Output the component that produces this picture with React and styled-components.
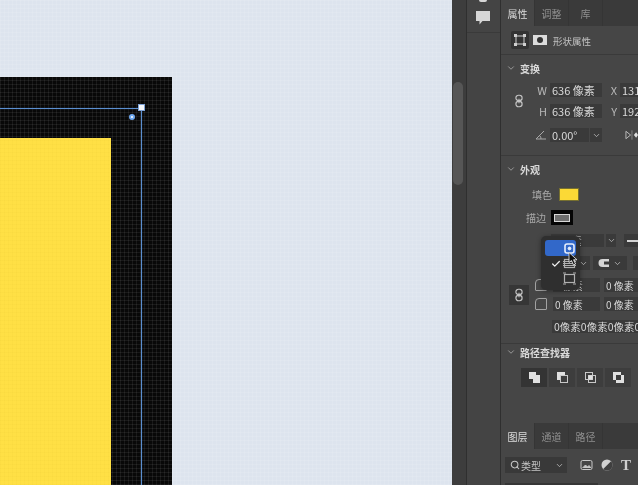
import styled, { createGlobalStyle } from "styled-components";
import { ChevronDown, Search, Check } from "lucide-react";

const GlobalStyle = createGlobalStyle`
  html, body {
    margin: 0;
    padding: 0;
    background: #464646;
  }
  * { box-sizing: border-box; }
`;

const Page = styled.div`
  display: flex;
  width: 638px;
  height: 485px;
  overflow: hidden;
  font-family: "Noto Sans CJK SC", "Noto Sans", sans-serif;
  color: #cfcfcf;
  font-size: 10px;
`;

const Canvas = styled.div`
  position: relative;
  width: 452px;
  flex: none;
  overflow: hidden;
  background-color: #dde4ee;
  background-image:
    repeating-linear-gradient(0deg, rgba(255,255,255,0.1) 0 1px, transparent 1px 4px),
    repeating-linear-gradient(90deg, rgba(255,255,255,0.1) 0 1px, transparent 1px 4px);
`;

const BlackRect = styled.div`
  position: absolute;
  left: 0;
  top: 77px;
  width: 172px;
  height: 408px;
  background-color: #080808;
  background-image:
    repeating-linear-gradient(0deg, rgba(255,255,255,0.07) 0 1px, transparent 1px 4px),
    repeating-linear-gradient(90deg, rgba(255,255,255,0.07) 0 1px, transparent 1px 4px);
`;

const YellowRect = styled.div`
  position: absolute;
  left: 0;
  top: 138px;
  width: 111px;
  height: 347px;
  background-color: #ffe045;
  background-image:
    repeating-linear-gradient(0deg, rgba(180,140,0,0.03) 0 1px, transparent 1px 4px),
    repeating-linear-gradient(90deg, rgba(180,140,0,0.03) 0 1px, transparent 1px 4px);
`;

const GuideH = styled.div`
  position: absolute;
  left: 0;
  top: 108px;
  width: 141px;
  height: 1px;
  background: #5b8fd0;
  box-shadow: 0 0 1px #3f66a0;
`;

const GuideV = styled.div`
  position: absolute;
  left: 141px;
  top: 108px;
  width: 1px;
  height: 377px;
  background: #5b8fd0;
  box-shadow: 0 0 1px #3f66a0;
`;

const Handle = styled.div`
  position: absolute;
  left: 138px;
  top: 104px;
  width: 7px;
  height: 7px;
  background: #f4f6fa;
  border: 1px solid #7fa3d6;
`;

const RadiusDot = styled.div`
  position: absolute;
  left: 129px;
  top: 114px;
  width: 6px;
  height: 6px;
  border-radius: 50%;
  background: #ffffff;
  border: 2px solid #6fa8ee;
`;

const Rail = styled.div`
  width: 15px;
  flex: none;
  background: #3d3d3d;
  border-right: 1px solid #2f2f2f;
  padding: 82px 0 0 1px;
`;

const Thumb = styled.div`
  width: 10px;
  height: 103px;
  border-radius: 5px;
  background: #565656;
`;

const Dock = styled.div`
  width: 34px;
  flex: none;
  background: #444444;
  border-right: 1px solid #2f2f2f;
`;

const DockTools = styled.div`
  height: 33px;
  display: flex;
  flex-direction: column;
  align-items: center;
  justify-content: space-between;
  padding: 0 1px 7px 0;
  border-bottom: 1px solid #3a3a3a;
  overflow: hidden;
`;

const DockStub = styled.div`
  width: 8px;
  height: 2px;
  background: #d6d6d6;
  border-radius: 0 0 2px 2px;
`;

const Panel = styled.div`
  position: relative;
  width: 137px;
  flex: none;
  display: flex;
  flex-direction: column;
  background: #464646;
  overflow: hidden;
  filter: blur(0.35px);
`;

const Tabs = styled.div`
  height: 26px;
  flex: none;
  display: flex;
  background: #3a3a3a;
`;

const Tab = styled.div`
  width: 34px;
  display: flex;
  align-items: center;
  justify-content: center;
  font-size: 10px;
  color: ${(p) => (p.$active ? "#dcdcdc" : "#8f8f8f")};
  background: ${(p) => (p.$active ? "#464646" : "transparent")};
  border-right: 1px solid #353535;
`;

const ShapeHeader = styled.div`
  height: 29px;
  flex: none;
  display: flex;
  align-items: center;
  padding-left: 10px;
  border-bottom: 1px solid #3a3a3a;
`;

const ShapeTool = styled.div`
  width: 18px;
  height: 18px;
  display: flex;
  align-items: center;
  justify-content: center;
  background: #333333;
  border-radius: 2px;
  margin-right: 4px;
`;

const MaskTool = styled.div`
  width: 14px;
  height: 10px;
  background: #dcdcdc;
  display: flex;
  align-items: center;
  justify-content: center;
  margin-right: 6px;
  &::after {
    content: "";
    width: 6px;
    height: 6px;
    border-radius: 50%;
    background: #333333;
  }
`;

const HeaderLabel = styled.span`
  font-size: 9.5px;
  color: #c2c2c2;
  padding-top: 1px;
`;

const Section = styled.div`
  flex: none;
  padding: ${(p) => p.$top}px 0 ${(p) => p.$bottom}px;
  border-bottom: ${(p) => (p.$line ? "1px solid #3a3a3a" : "none")};
`;

const Heading = styled.div`
  height: 16px;
  display: flex;
  align-items: center;
  gap: 4px;
  padding: 0 0 2px 5px;
  font-size: 10px;
  font-weight: 700;
  color: #d8d8d8;
`;

const LinkedRows = styled.div`
  display: flex;
  align-items: center;
  margin-top: 6px;
`;

const LinkCol = styled.div`
  width: ${(p) => p.$w || 36}px;
  flex: none;
  display: flex;
  justify-content: center;
`;

const RowStack = styled.div`
  display: flex;
  flex-direction: column;
  gap: ${(p) => p.$gap || 7}px;
`;

const Row = styled.div`
  display: flex;
  align-items: center;
  flex: none;
  height: ${(p) => p.$h || 14}px;
  margin-top: ${(p) => p.$mt || 0}px;
  padding-left: ${(p) => p.$pl || 0}px;
`;

const AxisLabel = styled.span`
  width: ${(p) => p.$w || 10}px;
  flex: none;
  text-align: right;
  margin-right: 3px;
  font-size: 11px;
  color: #b8b8b8;
`;

const Field = styled.div`
  width: ${(p) => p.$w}px;
  height: 100%;
  flex: none;
  display: flex;
  align-items: center;
  padding-left: ${(p) => p.$pl ?? 2}px;
  margin-right: ${(p) => p.$mr || 0}px;
  background: #3a3a3a;
  color: #d8d8d8;
  font-size: ${(p) => p.$fs || 11}px;
  white-space: nowrap;
  overflow: hidden;
`;

const DropBtn = styled.div`
  width: ${(p) => p.$w || 12}px;
  height: 100%;
  flex: none;
  display: flex;
  align-items: center;
  justify-content: ${(p) => p.$justify || "center"};
  gap: 4px;
  padding-right: ${(p) => p.$pr || 0}px;
  margin-right: ${(p) => p.$mr || 0}px;
  background: #3a3a3a;
  color: #c4c4c4;
`;

const SwatchLabel = styled.span`
  width: ${(p) => p.$w}px;
  flex: none;
  text-align: right;
  font-size: 10px;
  color: #a9a9a9;
`;

const FillSwatch = styled.div`
  width: 20px;
  height: 13px;
  margin-left: 7px;
  background: #fbd936;
  border: 1px solid #77702f;
`;

const StrokeSwatch = styled.div`
  width: 22px;
  height: 15px;
  margin-left: 5px;
  background: #050505;
  display: flex;
  align-items: center;
  justify-content: center;
  &::after {
    content: "";
    width: 14px;
    height: 6px;
    background: #6f6f6f;
    border: 1px solid #d8d8d8;
  }
`;

const LineSample = styled.div`
  width: 22px;
  height: 100%;
  flex: none;
  display: flex;
  align-items: center;
  padding-left: 3px;
  background: #3a3a3a;
  &::after {
    content: "";
    width: 100%;
    height: 2px;
    background: #d4d4d4;
  }
`;

const LinkBox = styled.div`
  width: 20px;
  height: 20px;
  flex: none;
  margin: 0 6px 0 8px;
  display: flex;
  align-items: center;
  justify-content: center;
  background: #363636;
`;

const CornerGroup = styled.div`
  display: flex;
  align-items: center;
  margin-top: 8px;
`;

const CornerMark = styled.div`
  width: 12px;
  height: 12px;
  flex: none;
  margin-right: 6px;
  border: 1px solid #a2a2a2;
  border-radius: 4px 1px 1px 1px;
`;

const PathBtn = styled.div`
  width: 26px;
  height: 19px;
  flex: none;
  margin-right: 2px;
  display: flex;
  align-items: center;
  justify-content: center;
  background: ${(p) => (p.$active ? "#343434" : "#3d3d3d")};
`;

const Spacer = styled.div`
  flex: 1;
`;

const TypeSelect = styled.div`
  width: 62px;
  height: 16px;
  flex: none;
  margin-left: 4px;
  display: flex;
  align-items: center;
  gap: 1px;
  padding: 0 3px 0 5px;
  background: #393939;
  font-size: 10px;
  color: #c6c6c6;
`;

const FilterIcons = styled.div`
  display: flex;
  align-items: center;
  gap: 8px;
  margin-left: 13px;
  color: #d0d0d0;
`;

const SerifT = styled.span`
  font-family: "Liberation Serif", serif;
  font-size: 15px;
  font-weight: 700;
  line-height: 1;
`;

const BottomField = styled.div`
  width: 93px;
  height: 2px;
  margin: 10px 0 0 4px;
  flex: none;
  background: #363636;
`;

const Popup = styled.div`
  position: absolute;
  left: 40px;
  top: 236px;
  width: 39px;
  height: 54px;
  padding: 4px;
  border-radius: 5px;
  background: #2f2f2f;
  box-shadow: 0 1px 5px rgba(0,0,0,0.4);
`;

const PopupRow = styled.div`
  height: ${(p) => (p.$active ? 16 : 15)}px;
  display: flex;
  align-items: center;
  justify-content: space-between;
  padding: 0 0 0 6px;
  border-radius: 3px;
  background: ${(p) => (p.$active ? "#3268c9" : "transparent")};
  color: #f0f0f0;
`;

const CheckSlot = styled.div`
  width: 10px;
  display: flex;
`;

const Pointer = styled.svg`
  position: absolute;
  left: 67px;
  top: 251px;
`;

const Comment = () => (
  <svg width="14" height="14" viewBox="0 0 14 14">
    <path d="M0 0h14v10H6.5L3.5 13.5V10H0z" fill="#d6d6d6" />
  </svg>
);

const ShapeIcon = () => (
  <svg width="12" height="12" viewBox="0 0 12 12" fill="none" stroke="#d0d0d0">
    <rect x="2" y="2" width="8" height="8" />
    <rect x="0.5" y="0.5" width="2" height="2" fill="#d0d0d0" />
    <rect x="9.5" y="0.5" width="2" height="2" fill="#d0d0d0" />
    <rect x="0.5" y="9.5" width="2" height="2" fill="#d0d0d0" />
    <rect x="9.5" y="9.5" width="2" height="2" fill="#d0d0d0" />
  </svg>
);

const LinkIcon = () => (
  <svg width="8" height="14" viewBox="0 0 9 15" fill="none" stroke="#c4c4c4" strokeWidth="1.3">
    <rect x="1" y="1" width="7" height="6" rx="3" />
    <rect x="1" y="8" width="7" height="6" rx="3" />
    <path d="M4.5 5v5" />
  </svg>
);

const AngleIcon = () => (
  <svg width="12" height="10" viewBox="0 0 12 10" fill="none" stroke="#a8a8a8">
    <path d="M11 9H1L9 1" />
    <path d="M6 9a4 4 0 0 0-1.5-3.5" />
  </svg>
);

const FlipIcon = () => (
  <svg width="14" height="10" viewBox="0 0 14 10">
    <path d="M1 1l5 4-5 4z" fill="none" stroke="#c0c0c0" />
    <path d="M7.5 0v10" stroke="#8a8a8a" />
    <path d="M12 2L9.5 5 12 8 14 5z" fill="#e0e0e0" />
  </svg>
);

const CapIcon = () => (
  <svg width="11" height="10" viewBox="0 0 11 10">
    <path d="M11 1H4.5a4 4 0 0 0 0 8H11z" fill="#d4d4d4" />
    <rect x="6" y="3.5" width="5" height="3" fill="#3a3a3a" />
  </svg>
);

const Combine = ({ kind }) => (
  <svg width="13" height="13" viewBox="0 0 13 13">
    {kind === 0 && (
      <path d="M1 1h7v3h4v8H5V8H1z" fill="#e0e0e0" />
    )}
    {kind === 1 && (
      <>
        <rect x="1" y="1" width="8" height="8" fill="#e0e0e0" />
        <rect x="4.5" y="4.5" width="7" height="7" fill="#3d3d3d" stroke="#c8c8c8" />
      </>
    )}
    {kind === 2 && (
      <>
        <rect x="1.5" y="1.5" width="7" height="7" fill="none" stroke="#c8c8c8" />
        <rect x="4.5" y="4.5" width="7" height="7" fill="none" stroke="#c8c8c8" />
        <rect x="4.5" y="4.5" width="4" height="4" fill="#e0e0e0" />
      </>
    )}
    {kind === 3 && (
      <>
        <rect x="1" y="1" width="8" height="8" fill="#e0e0e0" />
        <rect x="4" y="4" width="8" height="8" fill="#e0e0e0" />
        <rect x="4" y="4" width="5" height="5" fill="#3d3d3d" />
      </>
    )}
  </svg>
);

const InsideAlign = ({ mode }) => (
  <svg width="13" height="13" viewBox="0 0 13 13" fill="none" stroke={mode === 0 ? "#e6eefc" : "#b0b0b0"}>
    {mode === 0 ? (
      <>
        <rect x="2" y="2" width="9" height="9" rx="2" strokeWidth="1.6" />
        <circle cx="6.5" cy="6.5" r="1.4" fill="#e6eefc" />
      </>
    ) : (
      <>
        <rect x="1.5" y="2.5" width="10" height="8" strokeWidth="1.2" />
        <path d={mode === 1 ? "M0 6.5h13M0 4.5h13M0 8.5h13" : "M0 1h3M10 1h3M0 12h3M10 12h3"} />
      </>
    )}
  </svg>
);

const ImageIcon = () => (
  <svg width="13" height="12" viewBox="0 0 13 12" fill="none" stroke="#c8c8c8">
    <rect x="1" y="1.5" width="11" height="9" rx="1.5" />
    <path d="M2.5 9l3-3 2 2 1.5-1.5L11 9" fill="#c8c8c8" />
  </svg>
);

const AdjustIcon = () => (
  <svg width="12" height="12" viewBox="0 0 12 12">
    <circle cx="6" cy="6" r="5.5" fill="#d0d0d0" />
    <path d="M10 2.2A5.5 5.5 0 0 1 2.2 10z" fill="#3f3f3f" />
  </svg>
);

export default function App() {
  return (
    <>
      <GlobalStyle />
      <Page>
        <Canvas>
          <BlackRect />
          <YellowRect />
          <GuideH />
          <GuideV />
          <Handle />
          <RadiusDot />
        </Canvas>
        <Rail>
          <Thumb />
        </Rail>
        <Dock>
          <DockTools>
            <DockStub />
            <Comment />
          </DockTools>
        </Dock>
        <Panel>
          <Tabs>
            <Tab $active>属性</Tab>
            <Tab>调整</Tab>
            <Tab>库</Tab>
          </Tabs>
          <ShapeHeader>
            <ShapeTool>
              <ShapeIcon />
            </ShapeTool>
            <MaskTool />
            <HeaderLabel>形状属性</HeaderLabel>
          </ShapeHeader>

          <Section $top={6} $bottom={13} $line>
            <Heading>
              <ChevronDown size={10} color="#a8a8a8" />
              变换
            </Heading>
            <LinkedRows>
              <LinkCol>
                <LinkIcon />
              </LinkCol>
              <RowStack>
                <Row>
                  <AxisLabel>W</AxisLabel>
                  <Field $w={52} $mr={7}>636 像素</Field>
                  <AxisLabel $w={8}>X</AxisLabel>
                  <Field $w={40}>1314</Field>
                </Row>
                <Row>
                  <AxisLabel>H</AxisLabel>
                  <Field $w={52} $mr={7}>636 像素</Field>
                  <AxisLabel $w={8}>Y</AxisLabel>
                  <Field $w={40}>192</Field>
                </Row>
              </RowStack>
            </LinkedRows>
            <Row $mt={10} $pl={30}>
              <LinkCol $w={19}>
                <AngleIcon />
              </LinkCol>
              <Field $w={39} $mr={1}>0.00°</Field>
              <DropBtn $mr={23}>
                <ChevronDown size={9} />
              </DropBtn>
              <FlipIcon />
            </Row>
          </Section>

          <Section $top={6} $bottom={10} $line>
            <Heading>
              <ChevronDown size={10} color="#a8a8a8" />
              外观
            </Heading>
            <Row $mt={9}>
              <SwatchLabel $w={51}>填色</SwatchLabel>
              <FillSwatch />
            </Row>
            <Row $mt={9} $h={15}>
              <SwatchLabel $w={45}>描边</SwatchLabel>
              <StrokeSwatch />
            </Row>
            <Row $mt={9} $h={13} $pl={50}>
              <Field $w={53} $mr={2} $pl={3} $fs={10}>1 像素</Field>
              <DropBtn $w={10} $mr={8}>
                <ChevronDown size={9} />
              </DropBtn>
              <LineSample />
            </Row>
            <Row $mt={9} $pl={60}>
              <DropBtn $w={29} $mr={3} $justify="flex-end" $pr={2}>
                <ChevronDown size={9} />
              </DropBtn>
              <DropBtn $w={34} $mr={6}>
                <CapIcon />
                <ChevronDown size={9} />
              </DropBtn>
              <Field $w={6} />
            </Row>
            <CornerGroup>
              <LinkBox>
                <LinkIcon />
              </LinkBox>
              <RowStack $gap={5}>
                <Row>
                  <CornerMark />
                  <Field $w={47} $mr={4} $fs={10}>0 像素</Field>
                  <Field $w={40} $fs={10}>0 像素</Field>
                </Row>
                <Row>
                  <CornerMark />
                  <Field $w={47} $mr={4} $fs={10}>0 像素</Field>
                  <Field $w={40} $fs={10}>0 像素</Field>
                </Row>
              </RowStack>
            </CornerGroup>
            <Row $mt={9} $h={13} $pl={51}>
              <Field $w={86} $fs={10.5}>0像素0像素0像素0</Field>
            </Row>
          </Section>

          <Section $top={1} $bottom={0}>
            <Heading>
              <ChevronDown size={10} color="#a8a8a8" />
              路径查找器
            </Heading>
            <Row $mt={7} $h={19} $pl={20}>
              <PathBtn $active>
                <Combine kind={0} />
              </PathBtn>
              <PathBtn>
                <Combine kind={1} />
              </PathBtn>
              <PathBtn>
                <Combine kind={2} />
              </PathBtn>
              <PathBtn>
                <Combine kind={3} />
              </PathBtn>
            </Row>
          </Section>

          <Spacer />

          <Tabs>
            <Tab $active>图层</Tab>
            <Tab>通道</Tab>
            <Tab>路径</Tab>
          </Tabs>
          <Row $mt={8} $h={16}>
            <TypeSelect>
              <Search size={10} strokeWidth={2.5} />
              类型
              <Spacer />
              <ChevronDown size={9} />
            </TypeSelect>
            <FilterIcons>
              <ImageIcon />
              <AdjustIcon />
              <SerifT>T</SerifT>
            </FilterIcons>
          </Row>
          <BottomField />

          <Popup>
            <PopupRow $active>
              <CheckSlot />
              <InsideAlign mode={0} />
            </PopupRow>
            <PopupRow>
              <CheckSlot>
                <Check size={10} strokeWidth={3} />
              </CheckSlot>
              <InsideAlign mode={1} />
            </PopupRow>
            <PopupRow>
              <CheckSlot />
              <InsideAlign mode={2} />
            </PopupRow>
          </Popup>
          <Pointer width="10" height="16" viewBox="0 0 10 15">
            <path d="M1 1v10l2.5-2 2 4.5 2-1-2-4.2H9z" fill="#111" stroke="#eee" strokeWidth="0.8" />
          </Pointer>
        </Panel>
      </Page>
    </>
  );
}
